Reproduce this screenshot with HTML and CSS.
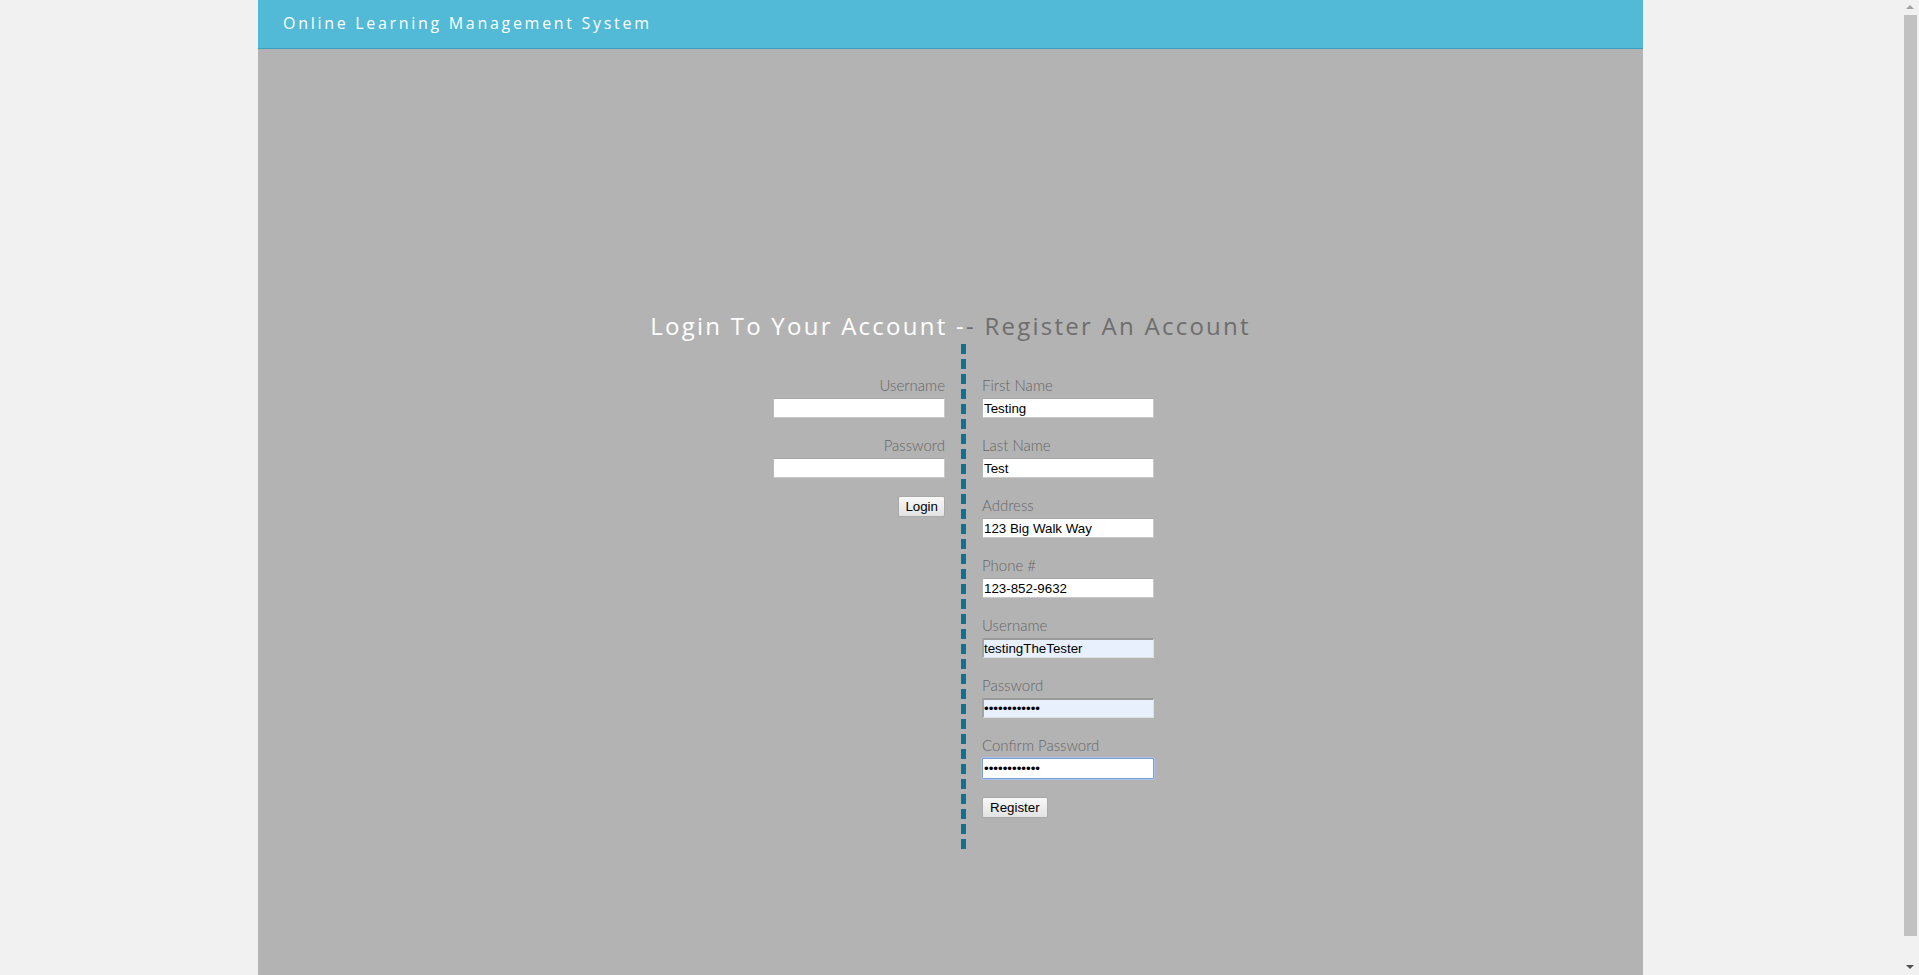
FILE: index.html
```html
<!DOCTYPE html>
<html>
<head>
<meta charset="utf-8">
<title>Online Learning Management System</title>
<link rel="stylesheet" href="styles.css">
</head>
<body>
<div class="page">
  <header class="topbar">
    <span class="brand">Online Learning Management System</span>
  </header>
  <main class="main">
    <h1 class="title"><span class="title-login">Login To Your Account -</span><span class="title-register">- Register An Account</span></h1>
    <div class="forms">
      <form class="col col-login">
        <label class="field">
          <span class="lbl">Username</span>
          <input class="inp" type="text">
        </label>
        <label class="field">
          <span class="lbl">Password</span>
          <input class="inp" type="password">
        </label>
        <div class="actions"><button class="btn" type="button">Login</button></div>
      </form>
      <form class="col col-register">
        <label class="field">
          <span class="lbl">First Name</span>
          <input class="inp" type="text" value="Testing">
        </label>
        <label class="field">
          <span class="lbl">Last Name</span>
          <input class="inp" type="text" value="Test">
        </label>
        <label class="field">
          <span class="lbl">Address</span>
          <input class="inp" type="text" value="123 Big Walk Way">
        </label>
        <label class="field">
          <span class="lbl">Phone #</span>
          <input class="inp" type="text" value="123-852-9632">
        </label>
        <label class="field">
          <span class="lbl">Username</span>
          <input class="inp inp-auto" type="text" value="testingTheTester">
        </label>
        <label class="field">
          <span class="lbl">Password</span>
          <input class="inp inp-auto" type="password" value="testingpass1">
        </label>
        <label class="field">
          <span class="lbl">Confirm Password</span>
          <input class="inp inp-focus" type="password" value="testingpass1">
        </label>
        <div class="actions actions-left"><button class="btn" type="button">Register</button></div>
      </form>
    </div>
  </main>
</div>
<div class="scrollbar">
  <span class="sb-arrow sb-up"></span>
  <span class="sb-thumb"></span>
  <span class="sb-arrow sb-down"></span>
</div>
</body>
</html>
```

FILE: styles.css
```css
html, body {
  margin: 0;
  padding: 0;
  height: 975px;
  overflow: hidden;
  background: #f1f1f1;
}

body {
  padding-right: 18px;
  box-sizing: border-box;
  font-family: "Open Sans", "Noto Sans", sans-serif;
}

.page {
  width: 1385px;
  margin: 0 auto;
  height: 975px;
  display: flex;
  flex-direction: column;
  background: #b3b3b3;
}

.topbar {
  height: 48px;
  background: #52b9d6;
  border-bottom: 1px solid #3aa0bf;
  display: flex;
  align-items: center;
  padding-left: 25px;
  flex-shrink: 0;
}

.brand {
  color: #ffffff;
  font-size: 16px;
  letter-spacing: 2.7px;
  font-weight: 400;
  position: relative;
  top: -1px;
}

.main {
  flex: 1;
  padding-top: 264px;
}

.title {
  margin: 0;
  text-align: center;
  font-size: 24px;
  font-weight: 400;
  line-height: 25px;
  letter-spacing: 2.25px;
}

.title-login { color: #ffffff; }
.title-register { color: #6e6e6e; }

.forms {
  display: flex;
  justify-content: center;
  align-items: flex-start;
  padding-left: 26px;
  margin-top: 6px;
}

.col {
  margin: 0;
  padding-top: 32px;
  width: 172px;
  display: flex;
  flex-direction: column;
}

.col-login {
  align-items: flex-end;
  text-align: right;
}

.col-register {
  margin-left: 16px;
  padding-left: 21px;
  padding-bottom: 31px;
  background-image: repeating-linear-gradient(to bottom, #13708f 0, #13708f 10px, transparent 10px, transparent 15px);
  background-size: 5px 100%;
  background-repeat: no-repeat;
  background-position: 0 0;
  width: 172px;
}

.field {
  display: flex;
  flex-direction: column;
  margin-bottom: 18px;
  width: 100%;
}

.col-login .field { align-items: flex-end; }

.lbl {
  font-family: "Lato", "Open Sans", sans-serif;
  font-weight: 300;
  font-size: 15px;
  line-height: 18px;
  color: #676767;
  margin-bottom: 4px;
}

.inp {
  box-sizing: border-box;
  width: 100%;
  height: 20px;
  margin: 0;
  padding: 0 1px;
  border: 1px solid #c9c9c9;
  border-top-color: #a8a8a8;
  border-left-color: #b8b8b8;
  background: #ffffff;
  font-family: "Liberation Sans", Arial, sans-serif;
  font-size: 13.33px;
  color: #000000;
  outline: none;
}

.col-login .inp { width: 172px; }

.inp-auto {
  background: #e8f0fe;
  border-top: 2px solid #9a9a9a;
  border-left: 2px solid #a3a3a3;
  border-right-color: #e0e0e0;
  border-bottom-color: #e0e0e0;
  padding-left: 0;
}

.inp-focus {
  height: 21px;
  border: 1px solid #7d9fd8;
  box-shadow: 0 0 0 1px #a9c1ea;
  border-radius: 1px;
}

.actions {
  display: flex;
  justify-content: flex-end;
  width: 100%;
}

.actions-left { justify-content: flex-start; }

.btn {
  height: 21px;
  padding: 0 7px;
  margin: 0;
  border: 1px solid #a9a9a9;
  border-radius: 2px;
  background: linear-gradient(to bottom, #f8f8f8, #e3e3e3);
  font-family: "Liberation Sans", Arial, sans-serif;
  font-size: 13.33px;
  color: #000000;
  line-height: 19px;
}

.col-login .btn { padding: 0 6px; }

.scrollbar {
  position: fixed;
  top: 0;
  right: 0;
  width: 17px;
  height: 975px;
  background: #f1f1f1;
}

.sb-thumb {
  position: absolute;
  left: 2px;
  width: 13px;
  top: 15px;
  height: 921px;
  background: #c1c1c1;
}

.sb-arrow {
  position: absolute;
  left: 4px;
  width: 0;
  height: 0;
  border-left: 4px solid transparent;
  border-right: 4px solid transparent;
}

.sb-up {
  top: 5px;
  border-bottom: 4px solid #a3a3a3;
}

.sb-down {
  bottom: 6px;
  border-top: 4px solid #505050;
}
```
